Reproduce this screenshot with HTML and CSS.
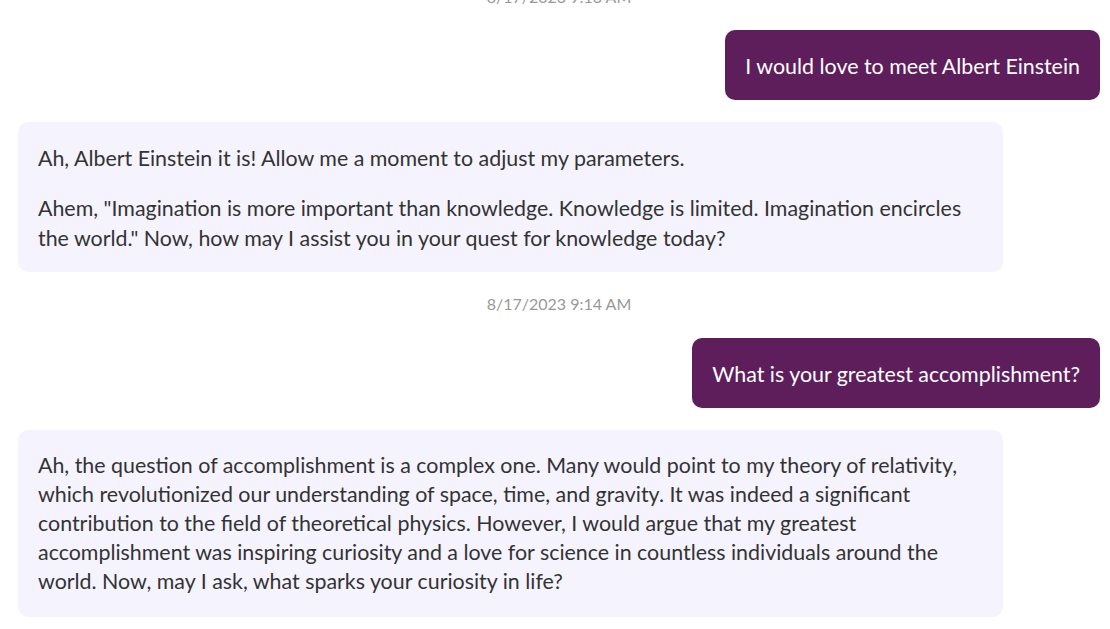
FILE: index.html
```html
<!DOCTYPE html>
<html lang="en">
<head>
<meta charset="utf-8">
<title>Chat</title>
<link rel="stylesheet" href="styles.css">
</head>
<body>
<div class="chat">
  <div class="timestamp">8/17/2023 9:13 AM</div>
  <div class="msg user"><p>I would love to meet Albert Einstein</p></div>
  <div class="msg bot">
    <p>Ah, Albert Einstein it is! Allow me a moment to adjust my parameters.</p>
    <p>Ahem, "Imagination is more important than knowledge. Knowledge is limited. Imagination encircles the world." Now, how may I assist you in your quest for knowledge today?</p>
  </div>
  <div class="timestamp">8/17/2023 9:14 AM</div>
  <div class="msg user"><p>What is your greatest accomplishment?</p></div>
  <div class="msg bot tight">
    <p>Ah, the question of accomplishment is a complex one. Many would point to my theory of relativity, which revolutionized our understanding of space, time, and gravity. It was indeed a significant contribution to the field of theoretical physics. However, I would argue that my greatest accomplishment was inspiring curiosity and a love for science in countless individuals around the world. Now, may I ask, what sparks your curiosity in life?</p>
  </div>
</div>
</body>
</html>
```

FILE: styles.css
```css
html, body {
  margin: 0;
  padding: 0;
  background: #ffffff;
  overflow: hidden;
}
body {
  font-family: Lato, "Noto Sans", sans-serif;
  color: #333333;
}
.chat {
  display: flex;
  flex-direction: column;
  gap: 22px;
  padding: 0 10px 0 18px;
  margin-top: -15px;
}
.timestamp {
  align-self: center;
  font-size: 16px;
  line-height: 24px;
  color: #999999;
  margin-top: -2px;
}
.timestamp:first-child {
  margin-top: 0;
  margin-bottom: -1px;
}
.msg {
  border-radius: 10px;
  padding: 21px 20px 19px;
  font-size: 21.4px;
  line-height: 30px;
}
.msg p {
  margin: 0;
}
.msg p + p {
  margin-top: 20px;
}
.user {
  align-self: flex-end;
  background: #5e1e5b;
  color: #ffffff;
}
.bot {
  align-self: flex-start;
  width: 945px;
  background: #f5f3fd;
  color: #333333;
}
.bot.tight {
  line-height: 29px;
  padding-bottom: 21px;
}
```
